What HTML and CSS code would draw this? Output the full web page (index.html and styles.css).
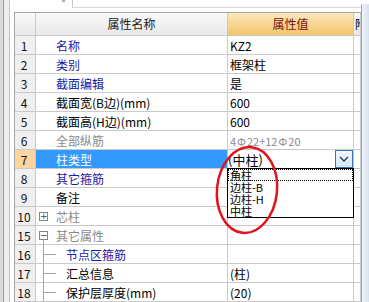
FILE: index.html
```html
<!DOCTYPE html>
<html lang="zh">
<head>
<meta charset="utf-8">
<title>属性编辑</title>
<link rel="stylesheet" href="styles.css">
</head>
<body>
<div class="app">
  <div class="leftbar"><div class="lb-a"></div><div class="lb-b"></div></div>
  <div class="main">
    <div class="tabstrip"><div class="tab-space"><span class="tab-tick"></span></div><div class="tab-rest"></div></div>
    <div class="grid">
      <div class="row head">
        <div class="c num"></div>
        <div class="c name">属性名称</div>
        <div class="c val">属性值</div>
        <div class="c extra">附</div>
      </div>
      <div class="row"><div class="c num">1</div><div class="c name blue">名称</div><div class="c val">KZ2</div><div class="c extra"></div></div>
      <div class="row"><div class="c num">2</div><div class="c name blue">类别</div><div class="c val">框架柱</div><div class="c extra"></div></div>
      <div class="row"><div class="c num">3</div><div class="c name blue">截面编辑</div><div class="c val">是</div><div class="c extra"></div></div>
      <div class="row"><div class="c num">4</div><div class="c name">截面宽(B边)(mm)</div><div class="c val">600</div><div class="c extra"></div></div>
      <div class="row"><div class="c num">5</div><div class="c name">截面高(H边)(mm)</div><div class="c val">600</div><div class="c extra"></div></div>
      <div class="row"><div class="c num">6</div><div class="c name gray">全部纵筋</div><div class="c val gray small">4<span class="bar">Φ</span>22+12<span class="bar">Φ</span>20</div><div class="c extra"></div></div>
      <div class="row sel"><div class="c num">7</div><div class="c name">柱类型</div><div class="c val edit"><span class="edit-text">(中柱)</span><span class="dd-btn"><svg width="10" height="6" viewBox="0 0 10 6"><polyline points="1,1 5,5 9,1" fill="none" stroke="#1e3c5a" stroke-width="1.3"/></svg></span></div><div class="c extra"></div></div>
      <div class="row"><div class="c num">8</div><div class="c name blue">其它箍筋</div><div class="c val"></div><div class="c extra"></div></div>
      <div class="row"><div class="c num">9</div><div class="c name">备注</div><div class="c val"></div><div class="c extra"></div></div>
      <div class="row"><div class="c num">10</div><div class="c name tree gray"><span class="gut"><span class="tbox">+</span></span>芯柱</div><div class="c val"></div><div class="c extra"></div></div>
      <div class="row"><div class="c num">15</div><div class="c name tree gray"><span class="gut"><span class="tbox">−</span><span class="vline below"></span></span>其它属性</div><div class="c val"></div><div class="c extra"></div></div>
      <div class="row"><div class="c num">16</div><div class="c name tree blue"><span class="gut wide"><span class="vline"></span><span class="hline"></span></span>节点区箍筋</div><div class="c val"></div><div class="c extra"></div></div>
      <div class="row"><div class="c num">17</div><div class="c name tree"><span class="gut wide"><span class="vline"></span><span class="hline"></span></span>汇总信息</div><div class="c val">(柱)</div><div class="c extra"></div></div>
      <div class="row"><div class="c num">18</div><div class="c name tree"><span class="gut wide"><span class="vline"></span><span class="hline"></span></span>保护层厚度(mm)</div><div class="c val">(20)</div><div class="c extra"></div></div>
    </div>
  </div>
  <div class="rightbar"></div>

  <ul class="dropdown">
    <li class="focus">角柱</li>
    <li>边柱-B</li>
    <li>边柱-H</li>
    <li>中柱</li>
  </ul>

  <svg class="annot" width="369" height="302" viewBox="0 0 369 302">
    <ellipse cx="247" cy="190" rx="30" ry="43" transform="rotate(6 247 190)" fill="none" stroke="#e2121c" stroke-width="2.5"/>
  </svg>
</div>
</body>
</html>
```

FILE: styles.css
```css
body {
  margin: 0;
  font-family: "Noto Sans CJK SC", "Noto Sans", sans-serif;
  font-size: 12px;
  color: #000;
  background: #fff;
}

.app {
  position: relative;
  width: 369px;
  height: 302px;
  display: flex;
  overflow: hidden;
  background: #fff;
}

.leftbar {
  width: 14px;
  display: flex;
  flex: none;
}

.lb-a {
  width: 3px;
  background: #dadada;
  border-right: 1px solid #9c9c9c;
}

.lb-b {
  width: 5px;
  background: #eeeeee;
  border-right: 1px solid #c4c4c4;
}

.main {
  width: 347px;
  flex: none;
  display: flex;
  flex-direction: column;
}

.tabstrip {
  height: 12px;
  display: flex;
  flex: none;
}

.tab-space {
  width: 58px;
  position: relative;
}

.tab-tick {
  position: absolute;
  left: 48px;
  top: 0;
  width: 3px;
  height: 2px;
  background: #b0b0b0;
}

.tab-rest {
  flex: 1;
  height: 8px;
  box-sizing: border-box;
  border-left: 1px solid #c6c6c6;
  border-bottom: 1px solid #d6d6d6;
}

.grid {
  border-left: 1px solid #a6a6a6;
  border-top: 1px solid #a6a6a6;
  flex: 1;
}

.row {
  display: grid;
  grid-template-columns: 21px 192px 126px 7px;
  height: 19px;
}

.row.head {
  height: 23px;
}

.c {
  box-sizing: border-box;
  border-right: 1px solid #c9c9c9;
  border-bottom: 1px solid #c9c9c9;
  display: flex;
  align-items: center;
  white-space: nowrap;
  overflow: hidden;
  line-height: 14px;
  padding-top: 1px;
}

.num {
  justify-content: center;
  padding-right: 2px;
  background: #f0f0f0;
  color: #111;
}

.name {
  padding-left: 20px;
}

.val {
  padding-left: 2px;
}

.blue { color: #1a1aa8; }
.gray { color: #8a8a8a; }

.small {
  font-size: 11px;
}

.bar {
  margin: 0 1px;
}

.head .c {
  background: linear-gradient(#f9f9f9, #e8e8e8);
  justify-content: center;
  padding: 0;
  color: #222;
}

.head .val {
  background: linear-gradient(#fde8bc, #f2c46c);
  color: #7a1212;
}

.head .extra {
  justify-content: flex-start;
  padding-left: 1px;
  color: #000;
}

.sel .num {
  background: #fcd49e;
}

.sel .name {
  background: #3399ff;
  color: #fff;
}

.edit {
  padding-left: 0;
  padding-top: 0;
  align-items: stretch;
}

.edit-text {
  display: flex;
  align-items: center;
  font-size: 13px;
  padding-top: 1px;
}

.dd-btn {
  margin-left: auto;
  width: 18px;
  box-sizing: border-box;
  border: 1px solid #3a78b4;
  background: linear-gradient(#eef5fd, #d8e8f8);
  display: flex;
  align-items: center;
  justify-content: center;
}

.tree {
  padding-left: 0;
}

.gut {
  position: relative;
  width: 20px;
  align-self: stretch;
  flex: none;
  margin-top: -1px;
}

.gut.wide {
  width: 30px;
}

.tbox {
  position: absolute;
  left: 3px;
  top: 5px;
  width: 9px;
  height: 9px;
  box-sizing: border-box;
  border: 1px solid #858585;
  background: #fff;
  color: #444;
  font-family: "DejaVu Sans", sans-serif;
  font-size: 9px;
  line-height: 7px;
  text-align: center;
}

.vline {
  position: absolute;
  left: 7px;
  top: 0;
  bottom: -1px;
  width: 1px;
  background: #a4a4a4;
}

.vline.below {
  top: 14px;
}

.hline {
  position: absolute;
  left: 7px;
  top: 9px;
  width: 13px;
  height: 1px;
  background: #a4a4a4;
}

.rightbar {
  width: 8px;
  flex: none;
  margin-top: 4px;
  box-sizing: border-box;
  border-left: 1px solid #98a6b8;
  background: linear-gradient(90deg, #eef3f9, #d7e1ee);
}

.dropdown {
  position: absolute;
  left: 227px;
  top: 168px;
  width: 127px;
  height: 50px;
  box-sizing: border-box;
  margin: 0;
  padding: 0;
  list-style: none;
  border: 1px solid #000;
  background: #fff;
}

.dropdown li {
  height: 12px;
  line-height: 12px;
  padding: 0 2px;
  font-size: 11px;
  color: #000;
}

.dropdown li.focus {
  outline: 1px dotted #000;
  outline-offset: -1px;
}

.annot {
  position: absolute;
  left: 0;
  top: 0;
  pointer-events: none;
}
```
